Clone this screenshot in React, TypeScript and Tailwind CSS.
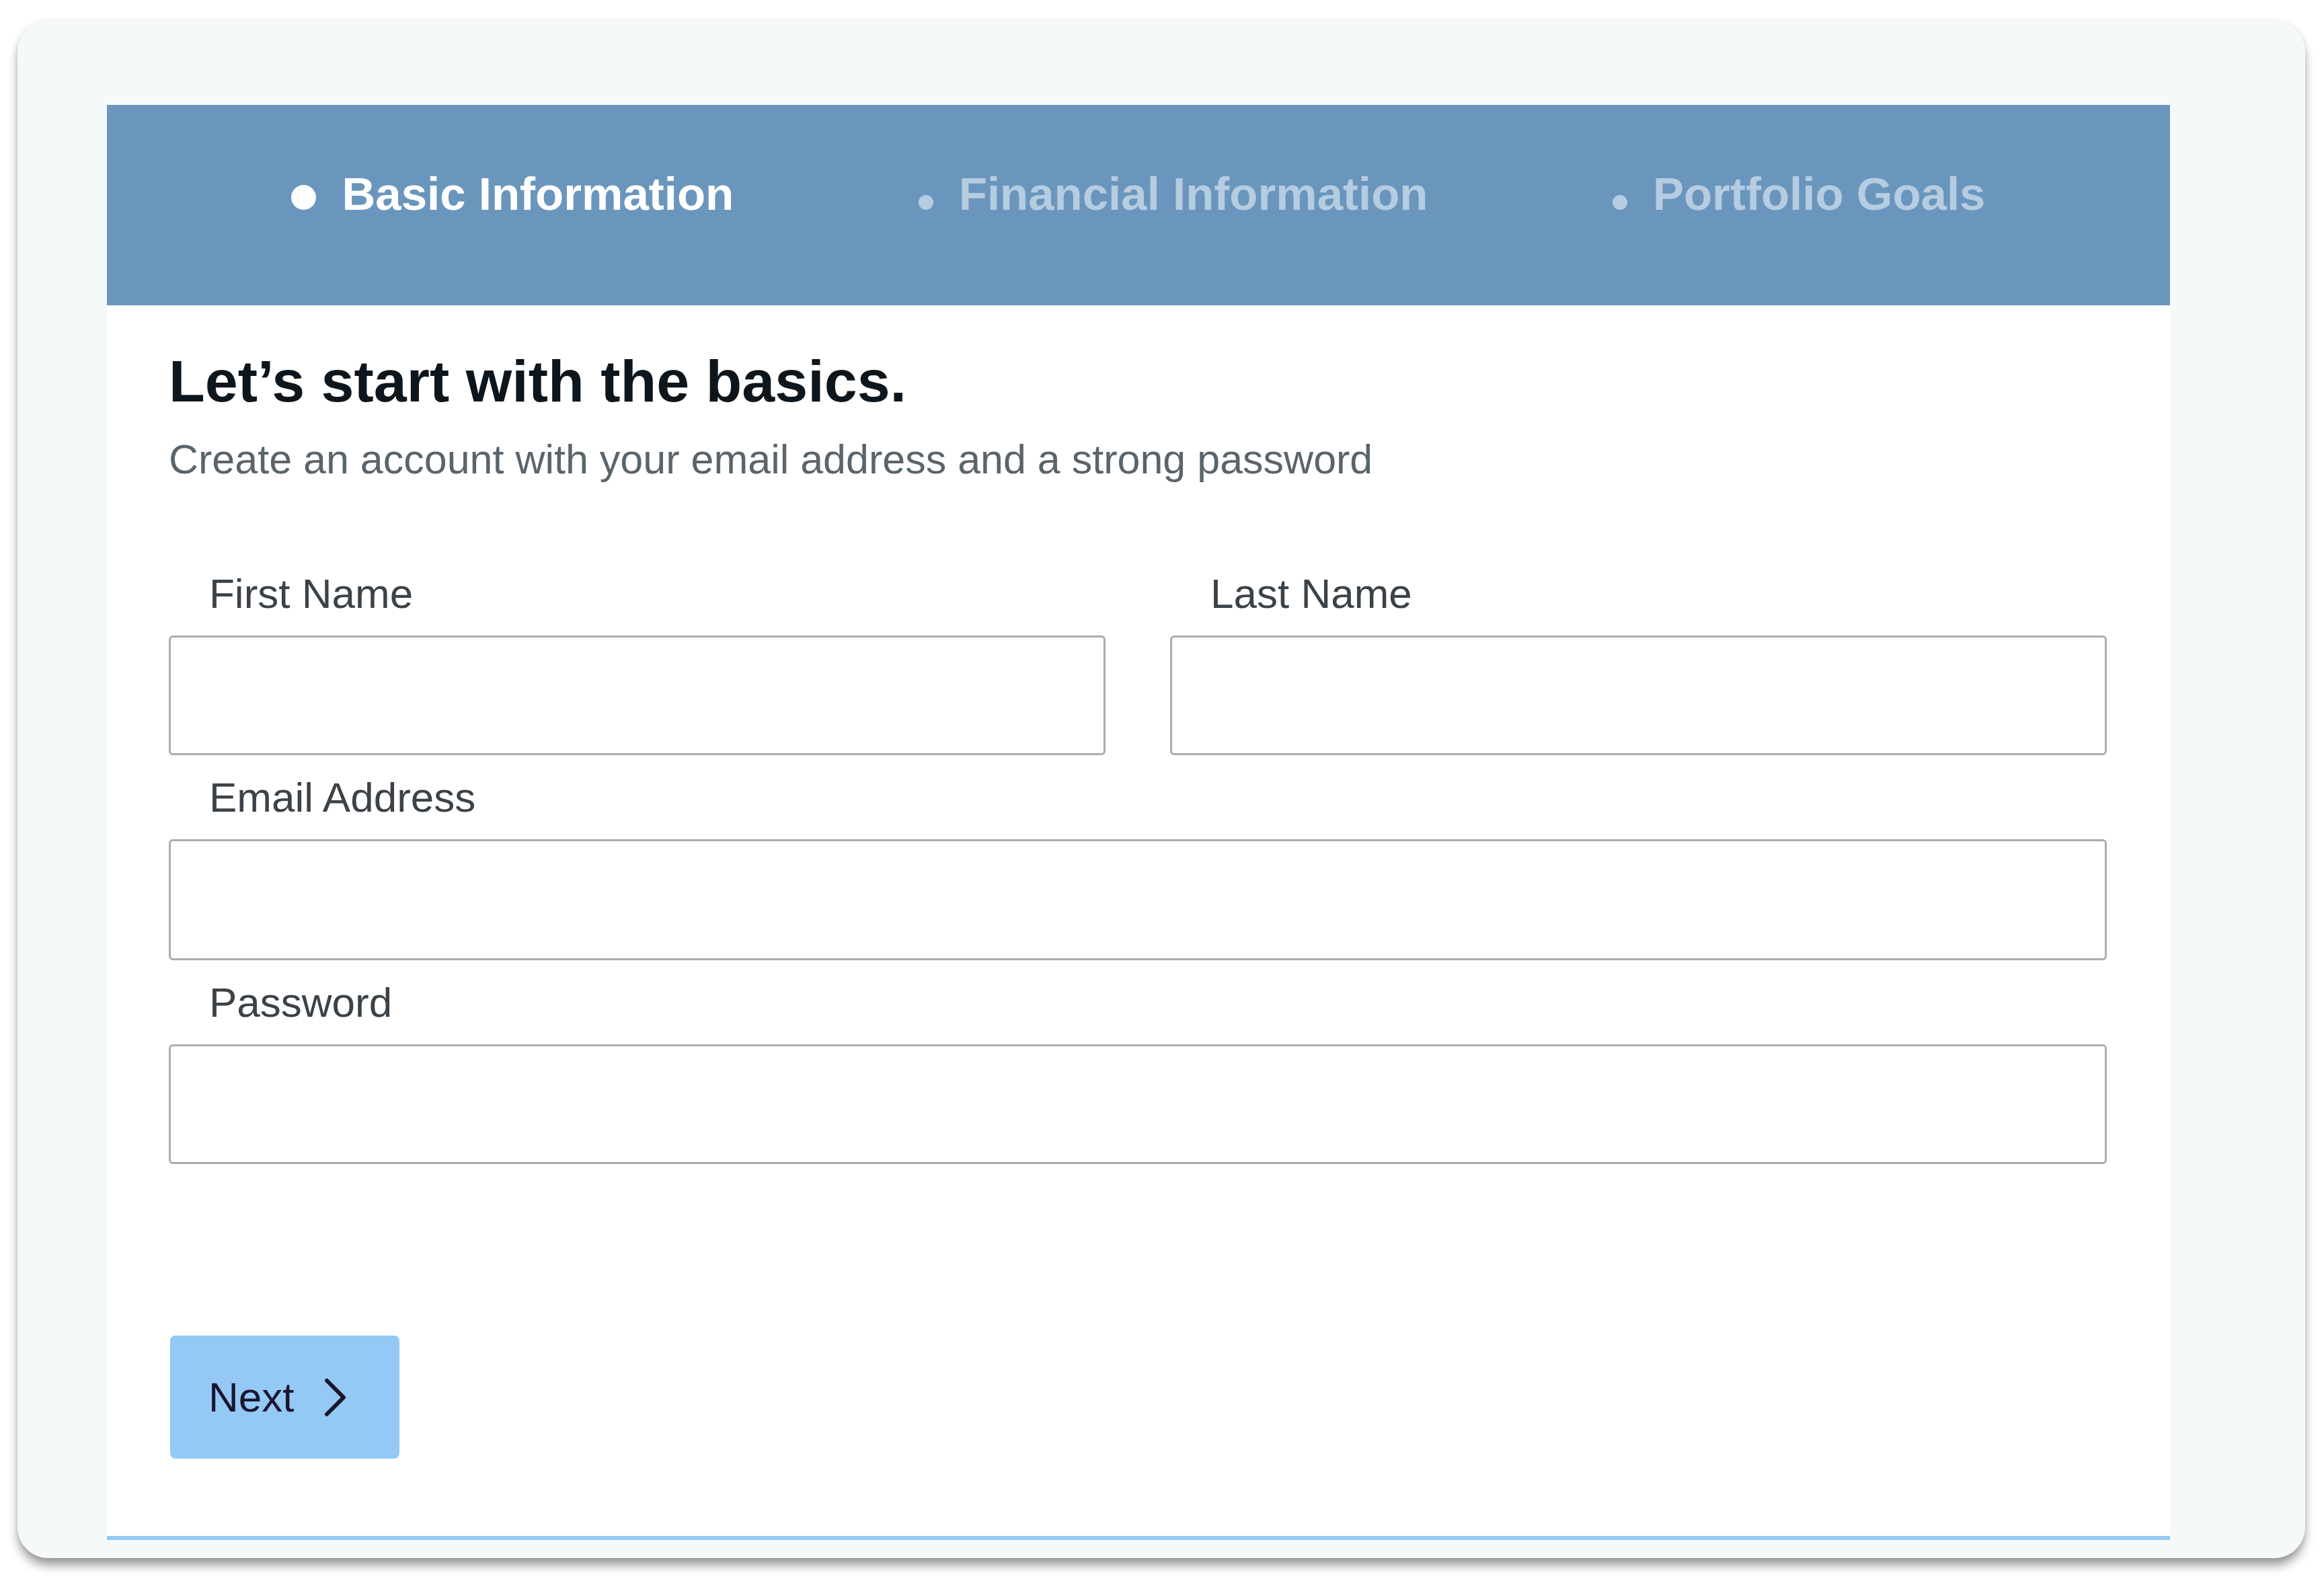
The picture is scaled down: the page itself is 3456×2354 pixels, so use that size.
import React from "react";

const font = { fontFamily: '"Liberation Sans", Arial, sans-serif' };

function Tab({ label, active }: { label: string; active?: boolean }) {
  return (
    <div className="flex items-baseline gap-[38px]">
      <span
        className={
          active
            ? "inline-block h-[37px] w-[37px] rounded-full bg-white"
            : "inline-block h-[22px] w-[22px] rounded-full bg-[#b5cce1]"
        }
      />
      <span
        className={
          "text-[69px] font-bold leading-[80px] " +
          (active ? "text-white" : "text-[#b5cce1]")
        }
      >
        {label}
      </span>
    </div>
  );
}

function Field({ label, className = "", inputClass = "h-[178px]" }: { label: string; className?: string; inputClass?: string }) {
  return (
    <div className={"flex flex-col " + className}>
      <label className="pl-[60px] text-[62px] leading-[72px] text-[#3b4248]">{label}</label>
      <input
        className={
          "mt-[26px] w-full rounded-[6px] border-[3px] border-[#a9adb1] bg-white outline-none " + inputClass
        }
      />
    </div>
  );
}

export default function App() {
  return (
    <div className="min-h-screen bg-white pl-[26px] pr-[28px] pt-[31px] pb-[36px]" style={font}>
      <div className="rounded-[46px] bg-[#f6f9fa] pl-[133px] pr-[201px] pt-[125px] pb-[27px] shadow-[0_12px_16px_-2px_rgba(0,0,0,0.42),0_0_8px_rgba(0,0,0,0.08)]">
        <div className="flex h-[298px] items-start justify-evenly bg-[#6a96bd] pt-[93px]">
          <Tab label="Basic Information" active />
          <Tab label="Financial Information" />
          <Tab label="Portfolio Goals" />
        </div>
        <div className="bg-white pl-[92px] pr-[94px] pt-[60px] pb-[115px]">
          <h1 className="text-[88px] font-bold leading-[106px] text-[#0e161d]">Let’s start with the basics.</h1>
          <p className="mt-[27px] text-[61px] leading-[72px] text-[#5a646b]">
            Create an account with your email address and a strong password
          </p>
          <div className="mt-[128px] grid grid-cols-2 gap-x-[96px]">
            <Field label="First Name" />
            <Field label="Last Name" />
          </div>
          <Field label="Email Address" className="mt-[27px]" inputClass="h-[180px]" />
          <Field label="Password" className="mt-[27px]" />
          <button className="ml-[2px] mt-[255px] flex h-[183px] w-[341px] items-center rounded-[8px] bg-[#93c9f4] pl-[57px]">
            <span className="text-[62px] leading-[72px] text-[#1b1630]">Next</span>
            <svg className="ml-[45px]" width="34" height="58" viewBox="0 0 34 58" fill="none">
              <polyline
                points="4,4 29,29 4,54"
                stroke="#1b1630"
                strokeWidth="6"
                strokeLinecap="round"
                strokeLinejoin="round"
              />
            </svg>
          </button>
        </div>
        <div className="h-[6px] bg-[#93c9f4]" />
      </div>
    </div>
  );
}
